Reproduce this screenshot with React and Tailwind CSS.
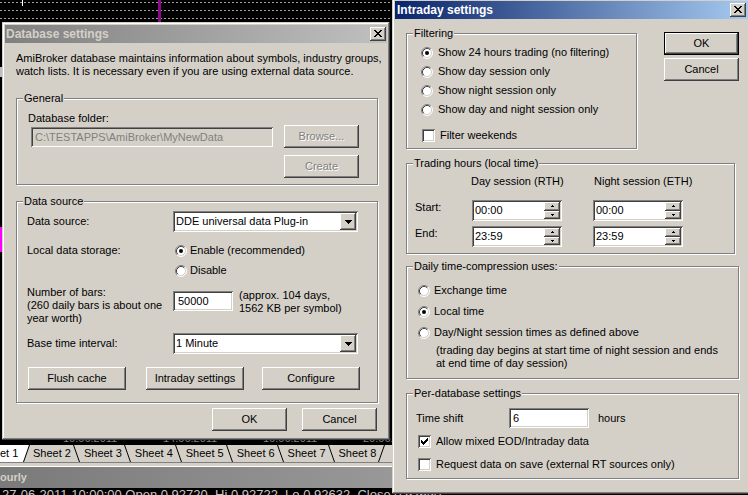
import React from 'react';

const RAISED = 'shadow-[inset_-1px_-1px_0_#404040,inset_1px_1px_0_#ffffff,inset_-2px_-2px_0_#808080,inset_2px_2px_0_#d4d0c8]';
const SUNKEN = 'shadow-[inset_1px_1px_0_#808080,inset_-1px_-1px_0_#ffffff,inset_2px_2px_0_#404040,inset_-2px_-2px_0_#d4d0c8]';
const FRAME = 'shadow-[inset_-1px_-1px_0_#404040,inset_1px_1px_0_#d4d0c8,inset_-2px_-2px_0_#808080,inset_2px_2px_0_#ffffff]';
const ETCHED = 'border border-[#808080] shadow-[inset_1px_1px_0_#ffffff,1px_1px_0_#ffffff]';
const DOTS = 'h-px bg-[repeating-linear-gradient(to_right,#a0a0a0_0_2px,transparent_2px_4px)]';

const Btn = ({ children, className = '', disabled, primary }) => (
  <button
    type="button"
    className={`flex items-center justify-center bg-[#d4d0c8] ${RAISED} ${primary ? 'border border-black' : ''} ${
      disabled ? 'text-[#808080] [text-shadow:1px_1px_0_#ffffff]' : ''
    } ${className}`}
  >
    {children}
  </button>
);

const CloseBtn = () => (
  <div className={`flex h-[14px] w-[16px] shrink-0 items-center justify-center bg-[#d4d0c8] ${RAISED}`}>
    <svg width="8" height="7" viewBox="0 0 8 7" shapeRendering="crispEdges" className="mb-px mr-px">
      <rect x="0" y="0" width="2" height="1" />
      <rect x="6" y="0" width="2" height="1" />
      <rect x="1" y="1" width="2" height="1" />
      <rect x="5" y="1" width="2" height="1" />
      <rect x="2" y="2" width="4" height="1" />
      <rect x="3" y="3" width="2" height="1" />
      <rect x="2" y="4" width="4" height="1" />
      <rect x="1" y="5" width="2" height="1" />
      <rect x="5" y="5" width="2" height="1" />
      <rect x="0" y="6" width="2" height="1" />
      <rect x="6" y="6" width="2" height="1" />
    </svg>
  </div>
);

const Radio = ({ checked }) => (
  <svg width="12" height="12" viewBox="0 0 12 12" className="shrink-0">
    <circle cx="6" cy="6" r="5" fill="#ffffff" />
    <path d="M2.11 9.89A5.5 5.5 0 0 1 9.89 2.11" stroke="#808080" fill="none" />
    <path d="M9.89 2.11A5.5 5.5 0 0 1 2.11 9.89" stroke="#ffffff" fill="none" />
    <path d="M2.82 9.18A4.5 4.5 0 0 1 9.18 2.82" stroke="#404040" fill="none" />
    <path d="M9.18 2.82A4.5 4.5 0 0 1 2.82 9.18" stroke="#d4d0c8" fill="none" />
    {checked && <circle cx="6" cy="6" r="2" fill="#000000" />}
  </svg>
);

const Check = ({ checked }) => (
  <span className={`flex h-[13px] w-[13px] shrink-0 items-center justify-center bg-white ${SUNKEN}`}>
    {checked && (
      <svg width="7" height="7" viewBox="0 0 7 7" shapeRendering="crispEdges">
        <rect x="6" y="0" width="1" height="1" />
        <rect x="5" y="1" width="2" height="1" />
        <rect x="0" y="2" width="1" height="1" />
        <rect x="4" y="2" width="3" height="1" />
        <rect x="0" y="3" width="2" height="1" />
        <rect x="3" y="3" width="3" height="1" />
        <rect x="0" y="4" width="5" height="1" />
        <rect x="1" y="5" width="3" height="1" />
        <rect x="2" y="6" width="1" height="1" />
      </svg>
    )}
  </span>
);

const RadioRow = ({ checked, children, gap = 'gap-[5px]' }) => (
  <div className={`flex h-[13px] items-center whitespace-nowrap ${gap}`}>
    <Radio checked={checked} />
    <span>{children}</span>
  </div>
);

const Combo = ({ value, className = '' }) => (
  <div className={`flex h-[21px] items-stretch bg-white p-[2px] ${SUNKEN} ${className}`}>
    <div className="flex-1 pl-px leading-[17px]">{value}</div>
    <div className={`flex w-[16px] items-center justify-center bg-[#d4d0c8] ${RAISED}`}>
      <svg width="7" height="4" viewBox="0 0 7 4" shapeRendering="crispEdges">
        <rect x="0" y="0" width="7" height="1" />
        <rect x="1" y="1" width="5" height="1" />
        <rect x="2" y="2" width="3" height="1" />
        <rect x="3" y="3" width="1" height="1" />
      </svg>
    </div>
  </div>
);

const SpinBtn = ({ up }) => (
  <div className={`flex flex-1 items-center justify-center bg-[#d4d0c8] ${RAISED}`}>
    <svg width="3" height="2" viewBox="0 0 3 2" shapeRendering="crispEdges">
      {up ? (
        <>
          <rect x="1" y="0" width="1" height="1" />
          <rect x="0" y="1" width="3" height="1" />
        </>
      ) : (
        <>
          <rect x="0" y="0" width="3" height="1" />
          <rect x="1" y="1" width="1" height="1" />
        </>
      )}
    </svg>
  </div>
);

const Spin = ({ value }) => (
  <div className={`flex h-[21px] w-[90px] items-stretch bg-white p-[2px] ${SUNKEN}`}>
    <div className="flex-1 pl-px leading-[17px]">{value}</div>
    <div className="flex w-[16px] flex-col">
      <SpinBtn up />
      <SpinBtn />
    </div>
  </div>
);

const Legend = ({ children }) => (
  <legend className="ml-[6px] whitespace-nowrap bg-[#d4d0c8] px-px">{children}</legend>
);

const DatabaseDialog = () => (
  <div className={`absolute left-[2px] top-[22px] h-[418px] w-[388px] bg-[#d4d0c8] p-[3px] ${FRAME}`}>
    <div className="flex h-[18px] items-center bg-[linear-gradient(to_right,#808080,#c0c0c0)] pl-px pr-px">
      <span className="flex-1 text-[12px] font-bold leading-[18px] text-[#d4d0c8]">Database settings</span>
      <CloseBtn />
    </div>

    <div className="pl-[11px]">
      <p className="mt-[9px] whitespace-nowrap">
        AmiBroker database maintains information about symbols, industry groups,
        <br />
        watch lists. It is necessary even if you are using external data source.
      </p>

      <fieldset className={`mt-[14px] w-[362px] ${ETCHED}`}>
        <Legend>General</Legend>
        <div className="flex pb-[6px] pl-[11px]">
          <div className="w-[256px] pt-[7px]">
            <div>Database folder:</div>
            <div className={`ml-[3px] mt-[2px] h-[20px] w-[242px] bg-[#d4d0c8] pl-[4px] leading-[20px] text-[#808080] ${SUNKEN}`}>
              {'C:\\TESTAPPS\\AmiBroker\\MyNewData'}
            </div>
          </div>
          <div className="flex flex-col gap-[7px] pt-[20px]">
            <Btn disabled className="h-[23px] w-[75px]">Browse...</Btn>
            <Btn disabled className="h-[23px] w-[75px]">Create</Btn>
          </div>
        </div>
      </fieldset>

      <fieldset className={`mt-[10px] w-[362px] ${ETCHED}`}>
        <Legend>Data source</Legend>
        <div className="pb-[12px] pl-[10px]">
          <div className="mt-[3px] flex items-center">
            <span className="w-[146px]">Data source:</span>
            <Combo value="DDE universal data Plug-in" className="w-[185px]" />
          </div>

          <div className="mt-[12px] flex">
            <span className="w-[146px]">Local data storage:</span>
            <div className="ml-[2px] flex flex-col gap-[7px]">
              <RadioRow checked gap="gap-[3px]">Enable (recommended)</RadioRow>
              <RadioRow gap="gap-[3px]">Disable</RadioRow>
            </div>
          </div>

          <div className="mt-[9px] flex">
            <span className="w-[146px] whitespace-nowrap">
              Number of bars:
              <br />
              (260 daily bars is about one
              <br />
              year worth)
            </span>
            <div className={`mt-[5px] h-[20px] w-[60px] bg-white pl-[5px] leading-[20px] ${SUNKEN}`}>50000</div>
            <span className="ml-[6px] mt-[3px] whitespace-nowrap">
              (approx. 104 days,
              <br />
              1562 KB per symbol)
            </span>
          </div>

          <div className="mt-[8px] flex items-center">
            <span className="w-[146px]">Base time interval:</span>
            <Combo value="1 Minute" className="w-[185px]" />
          </div>

          <div className="ml-px mt-[13px] flex">
            <Btn className="h-[23px] w-[98px]">Flush cache</Btn>
            <Btn className="ml-[20px] h-[23px] w-[98px]">Intraday settings</Btn>
            <Btn className="ml-[18px] h-[23px] w-[98px]">Configure</Btn>
          </div>
        </div>
      </fieldset>

      <div className="mt-[5px] flex w-[361px] justify-end gap-[15px]">
        <Btn className="h-[23px] w-[75px]">OK</Btn>
        <Btn className="h-[23px] w-[75px]">Cancel</Btn>
      </div>
    </div>
  </div>
);

const IntradayDialog = () => (
  <div className={`absolute left-[392px] top-[-2px] h-[496px] w-[359px] bg-[#d4d0c8] p-[3px] ${FRAME}`}>
    <div className="flex h-[18px] items-center bg-[linear-gradient(to_right,#0a246a,#a6caf0)] pl-[2px] pr-[2px]">
      <span className="flex-1 text-[12px] font-bold leading-[18px] text-white">Intraday settings</span>
      <CloseBtn />
    </div>

    <div className="pl-[11px]">
      <div className="mt-[8px] flex items-start">
        <fieldset className={`w-[231px] ${ETCHED}`}>
          <Legend>Filtering</Legend>
          <div className="pb-[6px] pl-[14px]">
            <div className="mt-[6px] flex flex-col gap-[6px]">
              <RadioRow checked>Show 24 hours trading (no filtering)</RadioRow>
              <RadioRow>Show day session only</RadioRow>
              <RadioRow>Show night session only</RadioRow>
              <RadioRow>Show day and night session only</RadioRow>
            </div>
            <div className="ml-px mt-[13px] flex items-center gap-[5px]">
              <Check />
              <span>Filter weekends</span>
            </div>
          </div>
        </fieldset>
        <div className="ml-[27px] flex flex-col gap-[3px] pt-[5px]">
          <Btn primary className="h-[23px] w-[75px]">OK</Btn>
          <Btn className="h-[23px] w-[75px]">Cancel</Btn>
        </div>
      </div>

      <fieldset className={`mt-[8px] w-[329px] ${ETCHED}`}>
        <Legend>Trading hours (local time)</Legend>
        <div className="pb-[6px] pl-[8px]">
          <div className="mt-[5px] flex whitespace-nowrap">
            <span className="w-[56px]" />
            <span className="w-[123px]">Day session (RTH)</span>
            <span>Night session (ETH)</span>
          </div>
          <div className="mt-[12px] flex items-start">
            <span className="w-[57px] pt-px">Start:</span>
            <Spin value="00:00" />
            <div className="ml-[31px]">
              <Spin value="00:00" />
            </div>
          </div>
          <div className="mt-[5px] flex items-start">
            <span className="w-[57px] pt-px">End:</span>
            <Spin value="23:59" />
            <div className="ml-[31px]">
              <Spin value="23:59" />
            </div>
          </div>
        </div>
      </fieldset>

      <fieldset className={`mt-[6px] w-[333px] ${ETCHED}`}>
        <Legend>Daily time-compression uses:</Legend>
        <div className="pb-[8px] pl-[11px]">
          <div className="mt-[11px] flex flex-col gap-[8px]">
            <RadioRow gap="gap-[4px]">Exchange time</RadioRow>
            <RadioRow checked gap="gap-[4px]">Local time</RadioRow>
            <RadioRow gap="gap-[4px]">Day/Night session times as defined above</RadioRow>
          </div>
          <p className="mt-[5px] whitespace-nowrap pl-[18px]">
            (trading day begins at start time of night session and ends
            <br />
            at end time of day session)
          </p>
        </div>
      </fieldset>

      <fieldset className={`mt-[8px] w-[333px] ${ETCHED}`}>
        <Legend>Per-database settings</Legend>
        <div className="pb-[7px] pl-[9px]">
          <div className="mt-[8px] flex items-center">
            <span className="w-[93px]">Time shift</span>
            <div className={`h-[20px] w-[80px] bg-white pl-[4px] leading-[20px] ${SUNKEN}`}>6</div>
            <span className="ml-[9px]">hours</span>
          </div>
          <div className="ml-[2px] mt-[7px] flex items-center gap-[5px]">
            <Check checked />
            <span>Allow mixed EOD/Intraday data</span>
          </div>
          <div className="ml-[2px] mt-[10px] flex items-center gap-[5px]">
            <Check />
            <span>Request data on save (external RT sources only)</span>
          </div>
        </div>
      </fieldset>
    </div>
  </div>
);

const sheets = ['Sheet 2', 'Sheet 3', 'Sheet 4', 'Sheet 5', 'Sheet 6', 'Sheet 7', 'Sheet 8'];

export default function App() {
  return (
    <div className="relative h-[495px] w-[748px] overflow-hidden bg-black font-['Liberation_Sans',Arial,sans-serif] text-[11px] leading-[13px] text-black">
      {/* chart window behind the dialogs */}
      <div className="flex h-full flex-col">
        <div className="relative flex-1">
          <div className={`mt-[2px] ${DOTS}`} />
          <div className={`mt-[7px] ${DOTS}`} />
          <div className={`mt-[7px] ${DOTS}`} />
          <div className="absolute left-[158px] top-0 h-[22px] w-[3px] bg-[#8b0a8b]" />
          <div className="absolute left-[22px] top-0 h-[6px] w-px bg-white" />
          <div className="absolute left-0 top-[67px] h-[10px] w-[2px] bg-[#c0c0c0]" />
          <div className="absolute left-0 top-[227px] h-[25px] w-[2px] bg-[#ff00ff]" />
        </div>

        <div className="flex h-[13px] whitespace-nowrap text-[#808080]">
          <span className="ml-[63px] w-[100px]">10.06.2011</span>
          <span className="w-[100px]">14.06.2011</span>
          <span className="w-[100px]">16.06.2011</span>
          <span className="w-[100px]">20.06.2011</span>
        </div>

        <div className="flex h-[18px] items-stretch whitespace-nowrap border-b border-[#808080] bg-[#d4d0c8]">
          <div className="flex w-[23px] items-center bg-white">
            <span>et 1</span>
          </div>
          <svg width="7" height="17" viewBox="0 0 7 17" className="shrink-0">
            <path d="M0 0H6L0 17Z" fill="#ffffff" />
            <path d="M0.5 17L6.5 0" stroke="#000000" />
          </svg>
          <div className="ml-[3px] flex items-center">
            {sheets.map((s, i) => (
              <React.Fragment key={s}>
                <span>{s}</span>
                <svg width="7" height="17" viewBox="0 0 7 17" className="ml-[2px] mr-[4px] shrink-0">
                  {i === sheets.length - 1 ? (
                    <path d="M0.5 17L6.5 0" stroke="#000000" />
                  ) : (
                    <path d="M0.5 0L6.5 17" stroke="#000000" />
                  )}
                </svg>
              </React.Fragment>
            ))}
          </div>
        </div>

        <div className="h-[4px] border-b border-white bg-[#d4d0c8]" />

        <div className="flex h-[21px] items-center bg-[linear-gradient(to_right,#7a7a7a,#989898_392px)]">
          <span className="text-[11px] font-bold text-[#d4d0c8]">ourly</span>
        </div>

        <div className="h-[7px] overflow-hidden whitespace-nowrap pl-[2px] text-[13px] text-[#c8c8c8]">
          27-06-2011 10:00:00 Open 0.92720, Hi 0.92722, Lo 0.92632, Close 0.92650
        </div>
      </div>

      <DatabaseDialog />
      <IntradayDialog />
    </div>
  );
}
